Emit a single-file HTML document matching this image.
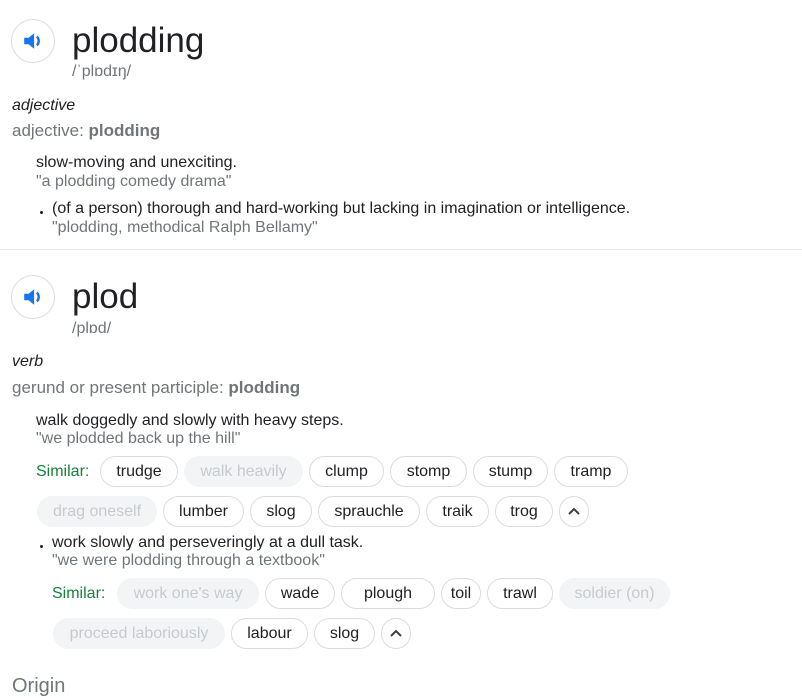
<!DOCTYPE html>
<html><head><meta charset="utf-8"><style>
body{margin:0;width:802px;height:680px;overflow:hidden;background:#fff;font-family:"Liberation Sans",Arial,sans-serif;color:#202124;position:relative}
.a{position:absolute;white-space:nowrap;line-height:20px}
.spk{position:absolute;width:44px;height:44px;border:1px solid #dadce0;border-radius:50%;box-sizing:border-box}
.spk svg{position:absolute;left:10px;top:10px}
.w{font-size:35px;line-height:40px}
.ph{font-size:16px;color:#70757a}
.g{font-size:17px;color:#70757a}
.g b{color:#70757a}
.d{font-size:16px}
.ex{font-size:16px;color:#70757a}
.sim{font-size:16px;color:#188038}
.c{position:absolute;height:31px;border:1px solid #dadce0;border-radius:16px;box-sizing:border-box;font-size:16px;line-height:30px;text-align:center;color:#202124}
.c.x{background:#f1f3f4;border-color:#f1f3f4;color:#bdc1c6;opacity:.85}
.bul{position:absolute;width:3px;height:3px;background:#202124;border-radius:50%}
</style></head><body>
<div class="spk" style="left:11px;top:19px"><svg width="22" height="22" viewBox="0 0 20 20"><path d="M2 7h4l5-4v14l-5-4H2z" fill="#1a73e8"/><path d="M13.5 6a5.5 5.5 0 0 1 0 8" stroke="#1a73e8" stroke-width="2.2" fill="none"/></svg></div>
<div class="a w" style="left:72px;top:21px">plodding</div>
<div class="a ph" style="left:72px;top:62px">/ˈplɒdɪŋ/</div>
<div class="a d" style="left:12px;top:96px;font-style:italic">adjective</div>
<div class="a g" style="left:12px;top:121px">adjective: <b>plodding</b></div>
<div class="a d" style="left:36px;top:153px">slow-moving and unexciting.</div>
<div class="a ex" style="left:36px;top:172px">"a plodding comedy drama"</div>
<div class="bul" style="left:40px;top:211px"></div>
<div class="a d" style="left:52px;top:199px">(of a person) thorough and hard-working but lacking in imagination or intelligence.</div>
<div class="a ex" style="left:52px;top:218px">"plodding, methodical Ralph Bellamy"</div>
<div style="position:absolute;left:0;top:249px;width:802px;height:1px;background:#e8eaed"></div>

<div class="spk" style="left:11px;top:275px"><svg width="22" height="22" viewBox="0 0 20 20"><path d="M2 7h4l5-4v14l-5-4H2z" fill="#1a73e8"/><path d="M13.5 6a5.5 5.5 0 0 1 0 8" stroke="#1a73e8" stroke-width="2.2" fill="none"/></svg></div>
<div class="a w" style="left:72px;top:277px">plod</div>
<div class="a ph" style="left:72px;top:319px">/plɒd/</div>
<div class="a d" style="left:12px;top:352px;font-style:italic">verb</div>
<div class="a g" style="left:12px;top:378px">gerund or present participle: <b>plodding</b></div>
<div class="a d" style="left:36px;top:411px">walk doggedly and slowly with heavy steps.</div>
<div class="a ex" style="left:36px;top:429px">"we plodded back up the hill"</div>
<div class="a sim" style="left:36px;top:462px">Similar:</div>
<div class="c" style="left:100px;top:456px;width:78px">trudge</div>
<div class="c x" style="left:184px;top:456px;width:119px">walk heavily</div>
<div class="c" style="left:309px;top:456px;width:75px">clump</div>
<div class="c" style="left:390px;top:456px;width:77px">stomp</div>
<div class="c" style="left:473px;top:456px;width:75px">stump</div>
<div class="c" style="left:554px;top:456px;width:74px">tramp</div>
<div class="c x" style="left:37px;top:496px;width:120px">drag oneself</div>
<div class="c" style="left:163px;top:496px;width:81px">lumber</div>
<div class="c" style="left:250px;top:496px;width:62px">slog</div>
<div class="c" style="left:318px;top:496px;width:102px">sprauchle</div>
<div class="c" style="left:426px;top:496px;width:63px">traik</div>
<div class="c" style="left:495px;top:496px;width:58px">trog</div>
<div class="c" style="left:559px;top:496px;width:30px"><svg width="14" height="10" viewBox="0 0 14 10" style="margin-top:9px"><path d="M2 8l5-5 5 5" stroke="#3c4043" stroke-width="2" fill="none"/></svg></div>
<div class="bul" style="left:40px;top:545px"></div>
<div class="a d" style="left:52px;top:533px">work slowly and perseveringly at a dull task.</div>
<div class="a ex" style="left:52px;top:551px">"we were plodding through a textbook"</div>
<div class="a sim" style="left:52px;top:584px">Similar:</div>
<div class="c x" style="left:117px;top:578px;width:142px">work one's way</div>
<div class="c" style="left:265px;top:578px;width:70px">wade</div>
<div class="c" style="left:341px;top:578px;width:94px">plough</div>
<div class="c" style="left:441px;top:578px;width:40px">toil</div>
<div class="c" style="left:487px;top:578px;width:66px">trawl</div>
<div class="c x" style="left:559px;top:578px;width:111px">soldier (on)</div>
<div class="c x" style="left:53px;top:618px;width:172px">proceed laboriously</div>
<div class="c" style="left:231px;top:618px;width:77px">labour</div>
<div class="c" style="left:314px;top:618px;width:61px">slog</div>
<div class="c" style="left:381px;top:618px;width:30px"><svg width="14" height="10" viewBox="0 0 14 10" style="margin-top:9px"><path d="M2 8l5-5 5 5" stroke="#3c4043" stroke-width="2" fill="none"/></svg></div>
<div class="a" style="left:12px;top:674px;font-size:20px;line-height:24px;color:#70757a">Origin</div>
</body></html>
